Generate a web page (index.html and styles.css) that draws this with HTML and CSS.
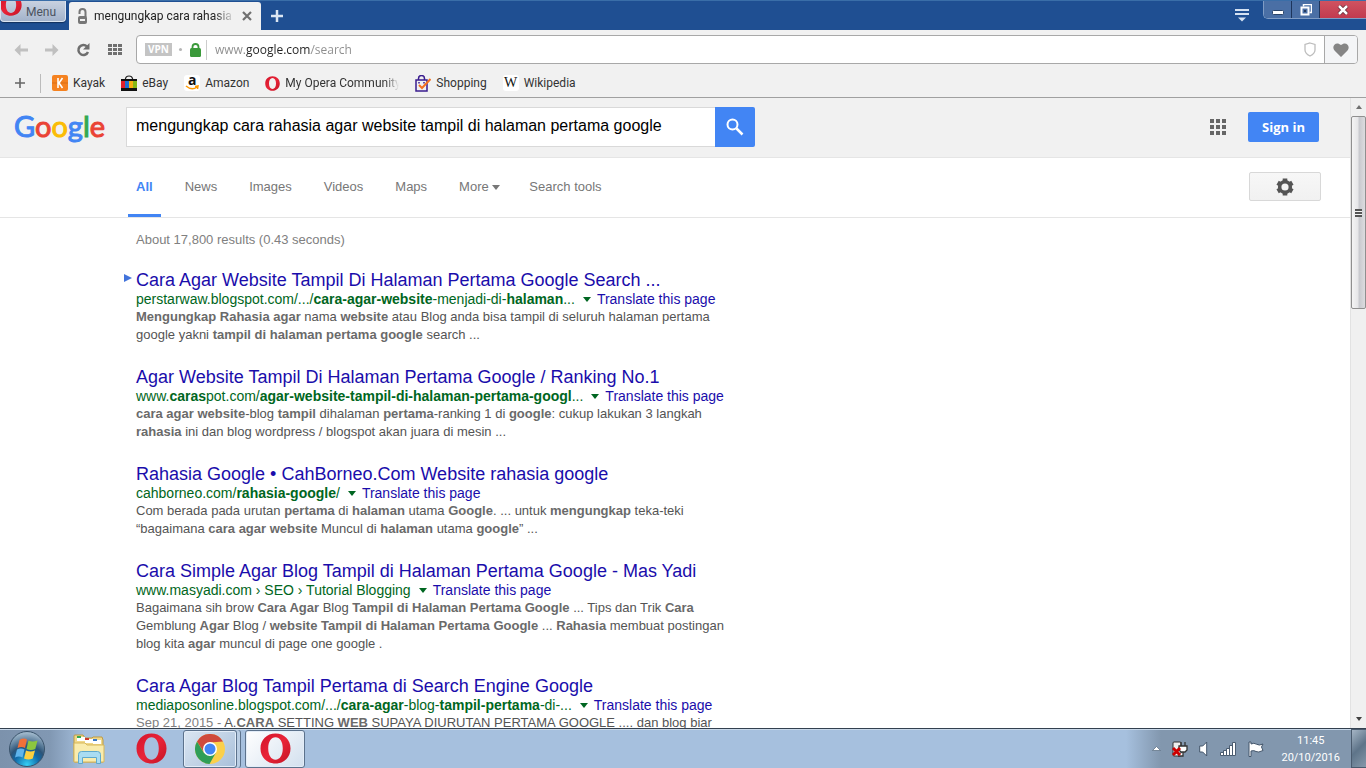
FILE: index.html
```html
<!DOCTYPE html>
<html lang="en">
<head>
    <meta charset="UTF-8">
    <title>mengungkap cara rahasia agar website tampil di halaman pertama google</title>
    <meta name="viewport" content="width=device-width, initial-scale=1.0" />
    <link rel="stylesheet" href="styles.css">
</head>

<body>
    <!-- shared drawings -->
    <svg class="defs" width="0" height="0">
        <defs>
            <linearGradient id="red" x1="0" y1="0" x2="1" y2="1">
                <stop offset="0" stop-color="#d3152a" />
                <stop offset=".5" stop-color="#e92438" />
                <stop offset="1" stop-color="#c41425" />
            </linearGradient>
            <symbol id="opera" viewBox="0 0 32 32">
                <path fill="url(#red)" fill-rule="evenodd" d="M16 .5C7 .5.500 7 .500 16S7 31.500 16 31.500 31.500 25 31.500 16 25 .5 16 .5zm0 4c4.500 0 7.500 4.500 7.500 11.500S20.500 27.500 16 27.500 8.500 23 8.500 16 11.500 4.500 16 4.500z" />
            </symbol>
        </defs>
    </svg>

    <header class="titlebar">
        <button class="menu-btn">
            <svg width="22" height="22"><use href="#opera" /></svg>
            Menu
        </button>
        <div class="tab">
            <svg width="9" height="16" viewBox="0 0 9 16">
                <path d="M1.500 6V4a3 3 0 0 1 6 0v5" fill="none" stroke="#777" stroke-width="2" />
                <rect x="0" y="8" width="9" height="8" rx="2" fill="#777" />
                <rect x="2" y="11" width="5" height="2" fill="#f1f1f1" />
            </svg>
            <span class="tab-title">mengungkap cara rahasia a</span>
            <button class="plain" aria-label="Close tab">
                <svg width="10" height="10" viewBox="0 0 10 10"><path d="M1 1l8 8M9 1L1 9" stroke="#707070" stroke-width="2.200" /></svg>
            </button>
        </div>
        <button class="plain new-tab" aria-label="New tab">
            <svg width="12" height="12" viewBox="0 0 12 12"><path d="M6 0v12M0 6h12" stroke="#dbe6f3" stroke-width="2.500" /></svg>
        </button>
        <button class="plain tab-list" aria-label="Tab menu">
            <svg width="14" height="13" viewBox="0 0 14 13"><path d="M0 1h14M0 5h14" stroke="#d5e2f2" stroke-width="2" /><path d="M3 8.500h8L7 12.500z" fill="#d5e2f2" /></svg>
        </button>
        <div class="win-btns">
            <button aria-label="Minimize">
                <svg width="12" height="12" viewBox="0 0 12 12"><rect x=".5" y="6.500" width="11" height="4" rx="1" fill="#fff" stroke="#2b4468" /></svg>
            </button>
            <button aria-label="Restore">
                <svg width="12" height="12" viewBox="0 0 12 12"><path d="M3.500 2.500v-2h8v8h-2" fill="none" stroke="#fff" stroke-width="1.500" /><rect x="1.500" y="3.500" width="7" height="7" fill="none" stroke="#fff" stroke-width="2" /><rect x="4" y="6" width="2" height="2" fill="#24395c" /></svg>
            </button>
            <button class="win-close" aria-label="Close">
                <svg width="12" height="10" viewBox="0 0 12 10"><path d="M2 1l8 8M10 1L2 9" stroke="#5b2330" stroke-width="4" /><path d="M2 1l8 8M10 1L2 9" stroke="#fff" stroke-width="2.500" /></svg>
            </button>
        </div>
    </header>

    <div class="toolbar">
        <div class="tools">
            <button class="plain" aria-label="Back">
                <svg width="14" height="12" viewBox="0 0 14 12"><path d="M6.500 0L.5 6l6 6V7.500H14v-3H6.500z" fill="#c0c0c0" /></svg>
            </button>
            <button class="plain" aria-label="Forward">
                <svg width="14" height="12" viewBox="0 0 14 12"><path d="M7.500 0l6 6-6 6V7.500H0v-3h7.500z" fill="#c0c0c0" /></svg>
            </button>
            <button class="plain" aria-label="Reload">
                <svg width="15" height="14" viewBox="0 0 15 14"><path d="M11 3.500A5 5 0 1 0 12 9" fill="none" stroke="#6e6e6e" stroke-width="2.500" /><path d="M13.500 0v6.500H7z" fill="#6e6e6e" /></svg>
            </button>
            <button class="plain" aria-label="Speed dial">
                <svg width="14" height="11" viewBox="0 0 14 11"><path d="M0 1.500h14M0 5.500h14M0 9.500h14" stroke="#707070" stroke-width="3" stroke-dasharray="4 1" /></svg>
            </button>
        </div>
        <div class="address">
            <span class="vpn">VPN</span>
            <span class="dot"></span>
            <svg width="11" height="14" viewBox="0 0 11 14"><path d="M2.500 7V4a3 3 0 0 1 6 0v3" fill="none" stroke="#3b9a3b" stroke-width="1.800" /><rect y="5" width="11" height="9" rx="1.500" fill="#3b9a3b" /></svg>
            <input class="url" type="text" aria-label="Address" value="www.google.com/search">
            <svg class="shield" width="12" height="15" viewBox="0 0 12 15"><path d="M6 1L11 2.500V8q0 3.500-5 6-5-2.500-5-6V2.500z" fill="none" stroke="#bdbdbd" stroke-width="1.300" /></svg>
            <button class="heart" aria-label="Add bookmark">
                <svg width="16" height="14" viewBox="0 0 16 14"><path d="M8 14L1.500 7.500C-2 3.500 3-2.500 8 2c5-4.500 10 1.500 6.500 5.500z" fill="#858585" /></svg>
            </button>
        </div>
    </div>

    <nav class="bookmarks">
        <button class="plain add" aria-label="Add to bookmarks bar">
            <svg width="10" height="10" viewBox="0 0 10 10"><path d="M5 0v10M0 5h10" stroke="#666" stroke-width="1.600" /></svg>
        </button>
        <a href="#">
            <svg width="16" height="16" viewBox="0 0 16 16"><rect width="16" height="16" rx="2" fill="#f58220" /><path d="M0 8h16" stroke="#d96f16" /><path d="M6 3v10M10.500 3L7 8l3.500 5" fill="none" stroke="#fff" stroke-width="1.600" /></svg>
            Kayak
        </a>
        <a href="#">
            <svg width="16" height="16" viewBox="0 0 16 16"><path d="M4.500 5V3.500Q5 1 8 1t3.500 2.500V5" fill="none" stroke="#222" stroke-width="1.200" /><path fill="#111" d="M0 4h16v12H0z" /><path fill="#e0202b" d="M0 6h4v7H0z" /><path fill="#1c6ed4" d="M4 6h4v7H4z" /><path fill="#f6ae12" d="M8 6h4v7H8z" /><path fill="#86b817" d="M12 6h4v7h-4z" /></svg>
            eBay
        </a>
        <a href="#">
            <span class="fav amazon">a<svg width="14" height="6" viewBox="0 0 14 6"><path d="M1 1q6 5 11 1M10 1.500l3-.5-.5 3" fill="none" stroke="#f90" stroke-width="1.500" /></svg></span>
            Amazon
        </a>
        <a href="#">
            <svg width="15" height="15"><use href="#opera" /></svg>
            <span class="fade">My Opera Community</span>
        </a>
        <a href="#">
            <svg width="16" height="17" viewBox="0 0 16 17"><path d="M1 5h11v11H1zM3.500 5V3.500a3 3 0 0 1 6 0V5M4 7v1.500M9 7v1.500" fill="none" stroke="#3a1d8f" stroke-width="1.500" /><path d="M4 10l3 3L15.500 4" fill="none" stroke="#f4701f" stroke-width="2" /></svg>
            Shopping
        </a>
        <a href="#"><span class="fav wiki">W</span>Wikipedia</a>
    </nav>

    <div class="viewport">
        <main class="page">
            <form class="search-header" onsubmit="return false">
                <a class="logo" href="#" aria-label="Google"><span class="b">G</span><span class="r">o</span><span class="y">o</span><span class="b">g</span><span class="g">l</span><span class="r">e</span></a>
                <input class="query" type="text" aria-label="Search" value="mengungkap cara rahasia agar website tampil di halaman pertama google">
                <button class="search-btn" aria-label="Google Search">
                    <svg width="18" height="18" viewBox="0 0 18 18"><circle cx="6.500" cy="6.500" r="5" fill="none" stroke="#fff" stroke-width="2" /><path d="M10.500 10.500l6 6" stroke="#fff" stroke-width="2.500" /></svg>
                </button>
                <div class="account">
                    <button class="plain" aria-label="Google apps">
                        <svg width="16" height="16" viewBox="0 0 16 16"><path d="M0 2h16M0 8h16M0 14h16" stroke="#666" stroke-width="4" stroke-dasharray="4 2" /></svg>
                    </button>
                    <a class="sign-in" href="#">Sign in</a>
                </div>
            </form>

            <nav class="filters">
                <a class="active" href="#">All</a>
                <a href="#">News</a>
                <a href="#">Images</a>
                <a href="#">Videos</a>
                <a href="#">Maps</a>
                <a class="more" href="#">More <i class="caret"></i></a>
                <a href="#">Search tools</a>
                <button class="options" aria-label="Options">
                    <svg width="18" height="18" viewBox="0 0 18 18"><path d="M9 .5v17M1.600 4.800l14.800 8.400M1.600 13.200l14.800-8.400" stroke="#555" stroke-width="4.600" /><circle cx="9" cy="9" r="5.300" fill="none" stroke="#555" stroke-width="3.600" /><circle cx="9" cy="9" r="3.600" fill="#f4f4f4" /></svg>
                </button>
            </nav>

            <div class="results">
                <p class="stats">About 17,800 results (0.43 seconds)</p>

                <article class="result first">
                    <h3><a href="#">Cara Agar Website Tampil Di Halaman Pertama Google Search ...</a></h3>
                    <div class="source"><cite>perstarwaw.blogspot.com/.../<b>cara-agar-website</b>-menjadi-di-<b>halaman</b>...</cite><button class="plain drop" aria-label="More"></button><a href="#">Translate this page</a></div>
                    <p><b>Mengungkap Rahasia agar</b> nama <b>website</b> atau Blog anda bisa tampil di seluruh halaman pertama<br>google yakni <b>tampil di halaman pertama google</b> search ...</p>
                </article>

                <article class="result">
                    <h3><a href="#">Agar Website Tampil Di Halaman Pertama Google / Ranking No.1</a></h3>
                    <div class="source"><cite>www.<b>caras</b>pot.com/<b>agar-website-tampil-di-halaman-pertama-googl</b>...</cite><button class="plain drop" aria-label="More"></button><a href="#">Translate this page</a></div>
                    <p><b>cara agar website</b>-blog <b>tampil</b> dihalaman <b>pertama</b>-ranking 1 di <b>google</b>: cukup lakukan 3 langkah<br><b>rahasia</b> ini dan blog wordpress / blogspot akan juara di mesin ...</p>
                </article>

                <article class="result">
                    <h3><a href="#">Rahasia Google • CahBorneo.Com Website rahasia google</a></h3>
                    <div class="source"><cite>cahborneo.com/<b>rahasia-google</b>/</cite><button class="plain drop" aria-label="More"></button><a href="#">Translate this page</a></div>
                    <p>Com berada pada urutan <b>pertama</b> di <b>halaman</b> utama <b>Google</b>. ... untuk <b>mengungkap</b> teka-teki<br>“bagaimana <b>cara agar website</b> Muncul di <b>halaman</b> utama <b>google</b>” ...</p>
                </article>

                <article class="result">
                    <h3><a href="#">Cara Simple Agar Blog Tampil di Halaman Pertama Google - Mas Yadi</a></h3>
                    <div class="source"><cite>www.masyadi.com › SEO › Tutorial Blogging</cite><button class="plain drop" aria-label="More"></button><a href="#">Translate this page</a></div>
                    <p>Bagaimana sih brow <b>Cara Agar</b> Blog <b>Tampil di Halaman Pertama Google</b> ... Tips dan Trik <b>Cara</b><br>Gemblung <b>Agar</b> Blog / <b>website Tampil di Halaman Pertama Google</b> ... <b>Rahasia</b> membuat postingan<br>blog kita <b>agar</b> muncul di page one google .</p>
                </article>

                <article class="result">
                    <h3><a href="#">Cara Agar Blog Tampil Pertama di Search Engine Google</a></h3>
                    <div class="source"><cite>mediaposonline.blogspot.com/.../<b>cara-agar</b>-blog-<b>tampil-pertama</b>-di-...</cite><button class="plain drop" aria-label="More"></button><a href="#">Translate this page</a></div>
                    <p><span class="date">Sep 21, 2015 - </span>A.<b>CARA</b> SETTING <b>WEB</b> SUPAYA DIURUTAN PERTAMA GOOGLE .... dan blog biar</p>
                </article>
            </div>
        </main>

        <div class="scrollbar">
            <i class="arrow up"></i>
            <div class="thumb"></div>
            <i class="arrow down"></i>
        </div>
    </div>

    <footer class="taskbar">
        <button class="plain start" aria-label="Start">
            <svg width="38" height="38" viewBox="0 0 38 38">
                <defs>
                    <radialGradient id="orb" cx=".5" cy=".95" r=".9">
                        <stop offset="0" stop-color="#35d0f5" />
                        <stop offset=".4" stop-color="#1169a8" />
                        <stop offset=".6" stop-color="#2c5478" />
                        <stop offset="1" stop-color="#9db6ca" />
                    </radialGradient>
                </defs>
                <circle cx="19" cy="19" r="17.500" fill="url(#orb)" stroke="#3a536b" />
                <path fill="#f0703a" d="M11.500 10q4-2.500 7.500-.5l-2 8.500q-3.500-2-7.500 0z" />
                <path fill="#8cc63f" d="M20.500 10.500q4 2 9 0l-2.200 8.500q-4.500 2-8.800 0z" />
                <path fill="#5fb4ec" d="M9 19.500q4-2 7.500 0l-2 8q-3.500-2-7.500 0z" />
                <path fill="#fdcf3f" d="M18 20.500q4.500 2 9 0l-2.200 8q-4.300 2-8.800 0z" />
            </svg>
        </button>
        <button class="plain task" aria-label="Windows Explorer">
            <svg width="32" height="30" viewBox="0 0 32 30">
                <path fill="#f0d88a" stroke="#bd9a43" d="M1 4V2q0-1 1-1h8l2 3h7l1-1h9l1 3v22H2q-1 0-1-1z" />
                <path fill="#fff" d="M4 3h8v4H4zM12 5h8v4h-8zM20 6h8v4h-8z" />
                <path fill="#35a852" d="M4 2h4v2H4z" /><path fill="#cf3a2c" d="M12 4h4v2h-4z" /><path fill="#3a79c9" d="M20 5h4v2h-4z" />
                <path fill="#f9ecae" stroke="#d7b75b" d="M1 9h11l2 2h17v17H1z" />
                <path fill="#a9dcf2" stroke="#5fa9cc" d="M5.500 29.500v-9q0-3 3-3h16q3 0 3 3v9h-4v-6h-14v6z" />
            </svg>
        </button>
        <button class="plain task" aria-label="Opera">
            <svg width="31" height="31"><use href="#opera" /></svg>
        </button>
        <button class="window-task stacked" aria-label="Google Chrome">
            <svg width="30" height="30" viewBox="0 0 30 30">
                <circle cx="15" cy="15" r="15" fill="#fbd04b" />
                <path fill="#cf4a3c" d="M2 7.500A15 15 0 0 1 28 7.500L15 8.500 9 18.500z" />
                <path fill="#2f9e58" d="M2 7.500L8.700 18.500 15 21.700 21 18.500 14.500 30A15 15 0 0 1 2 7.500z" />
                <circle cx="15" cy="15" r="7" fill="#fff" /><circle cx="15" cy="15" r="5.500" fill="#4285f4" />
            </svg>
        </button>
        <button class="window-task current" aria-label="Opera window">
            <svg width="31" height="31"><use href="#opera" /></svg>
        </button>

        <div class="tray">
            <svg width="9" height="5" viewBox="0 0 9 5"><path d="M.5 4.500L4.500.5l4 4z" fill="#fff" stroke="#55687d" stroke-width=".7" /></svg>
            <svg width="16" height="18" viewBox="0 0 16 18"><rect x="1" y="2" width="8" height="14" rx="1" fill="#eee" stroke="#333" /><path d="M9 2v4M13 2v4M7 6h8v4l-2 2H9L7 10zM11 12v4H6" fill="#fff" stroke="#333" stroke-width="1.300" /><path d="M1 8l7 7M8 8l-7 7" stroke="#c00" stroke-width="3" /></svg>
            <svg width="10" height="16" viewBox="0 0 10 16"><path d="M.7 5h3l4-4v14l-4-4h-3z" fill="#fff" stroke="#43556a" /></svg>
            <svg width="17" height="14" viewBox="0 0 17 14"><path d="M.5 10.500h3v3h-3zM3.500 8.500h3v5h-3zM6.500 6.500h3v7h-3zM9.500 3.500h3v10h-3zM12.500.5h3v13h-3z" fill="#fff" stroke="#4b5c70" /></svg>
            <svg width="16" height="16" viewBox="0 0 16 16"><path d="M1 1v14.500h2V10q3-1 5 .5t7-1L13.500 6 15 3Q11 5 8.500 3.200T3 3V1z" fill="#fff" stroke="#43556a" /></svg>
        </div>
        <div class="clock">
            <time>11:45</time>
            <time>20/10/2016</time>
        </div>
        <button class="show-desktop" aria-label="Show desktop"></button>
    </footer>
</body>

</html>
```
FILE: styles.css
```css
* {
    box-sizing: border-box;
}

body {
    display: flex;
    flex-direction: column;
    height: 100vh;
    margin: 0;
    overflow: hidden;

    background: white;
    font-family: "Liberation Sans", Arial, sans-serif;
    font-size: 13px;
}

a {
    text-decoration: none;
}

button {
    display: flex;
    align-items: center;
    justify-content: center;
    padding: 0;
    font-family: inherit;
}

svg {
    display: block;
    flex: none;
}

.defs {
    position: absolute;
}

.plain {
    border: none;
    background: none;
}

/* title bar */
.titlebar {
    display: flex;
    height: 30px;
    flex: none;

    background: #1f4f92;
    border-top: 1px solid #3a6ea8;
    font-family: Roboto, "Noto Sans", sans-serif;
    font-size: 12px;
}

.menu-btn {
    width: 66px;
    height: 21px;
    gap: 4px;
    align-items: flex-end;
    justify-content: flex-start;
    overflow: hidden;
    padding-bottom: 2px;

    background: linear-gradient(#c9d2e0, #a3b3cb);
    border: 1px solid #dbe4f0;
    border-top: none;
    border-radius: 0 0 4px 4px;
    box-shadow: 0 1px 1px #12305c;
    color: #4a5260;
    font-size: 12px;
}

.menu-btn svg {
    margin: 0 0 3px -1px;
}

.tab {
    display: flex;
    align-items: center;
    gap: 7px;
    width: 192px;
    margin: 1px 0 0 3px;
    padding: 0 9px;

    background: #f1f1f1;
    border-radius: 3px 3px 0 0;
}

.tab-title {
    flex: 1;
    overflow: hidden;
    white-space: nowrap;
    color: #222;
    -webkit-mask-image: linear-gradient(to right, black 85%, transparent);
    mask-image: linear-gradient(to right, black 85%, transparent);
}

.new-tab {
    margin-left: 10px;
}

.tab-list {
    margin-left: auto;
    margin-right: 14px;
}

.win-btns {
    display: flex;
    height: 18px;
    border: 1px solid #7f9cc4;
    border-top: none;
    border-right: none;
    border-radius: 0 0 0 5px;
    overflow: hidden;
}

.win-btns button {
    width: 28px;
    border: none;
    border-right: 1px solid #1d355c;
    background: #4a6fa5;
}

.win-btns .win-close {
    width: 46px;
    border: none;
    background: linear-gradient(#cf5360, #c23a4f);
}

/* toolbar */
.toolbar {
    display: flex;
    flex: none;
    padding: 5px 8px 5px 14px;
    background: #f1f1f1;
}

.tools {
    display: flex;
    gap: 17px;
    width: 122px;
}

.address {
    display: flex;
    align-items: center;
    flex: 1;
    height: 29px;

    background: white;
    border: 1px solid #a8a8a8;
    border-radius: 4px;
    overflow: hidden;
}

.vpn {
    margin-left: 8px;
    padding: 0 3px;
    background: #c4c4c4;
    color: white;
    font: bold 10px/13px "Open Sans", sans-serif;
}

.dot {
    width: 3px;
    height: 3px;
    margin: 0 8px 0 7px;
    border-radius: 50%;
    background: #b5b5b5;
}

.url {
    flex: 1;
    min-width: 0;
    height: 20px;
    margin-left: 5px;
    padding: 0 8px;

    border: none;
    border-left: 1px solid #ccc;
    outline: none;
    font-family: "Open Sans", "Noto Sans", sans-serif;
    font-size: 12px;
    /* the domain is darker than the rest of the address */
    background: linear-gradient(to right, #8c8c8c 39px, #222 39px, #222 104px, #8c8c8c 104px);
    -webkit-background-clip: text;
    background-clip: text;
    -webkit-text-fill-color: transparent;
}

.shield {
    margin-right: 8px;
}

.heart {
    width: 33px;
    height: 100%;
    border: none;
    border-left: 1px solid #a8a8a8;
    background: #f4f5f7;
}

/* bookmarks bar */
.bookmarks {
    display: flex;
    align-items: center;
    gap: 16px;
    height: 29px;
    flex: none;
    padding-left: 15px;

    background: #f1f1f1;
    border-bottom: 1px solid #a0a0a0;
    font-family: Roboto, "Noto Sans", sans-serif;
    font-size: 12px;
}

.bookmarks .add {
    height: 19px;
    padding-right: 15px;
    margin-right: -5px;
    border-right: 1px solid #bbb;
}

.bookmarks a {
    display: flex;
    align-items: center;
    gap: 5px;
    color: #333;
}

.fav {
    width: 16px;
    height: 16px;
    border-radius: 3px;
    background: white;
    text-align: center;
    color: #111;
}

.amazon {
    font: bold 14px/9px "Open Sans", sans-serif;
}

.amazon svg {
    margin: 1px;
}

.wiki {
    font: 14px/16px "Liberation Serif", serif;
}

.fade {
    width: 114px;
    overflow: hidden;
    white-space: nowrap;
    -webkit-mask-image: linear-gradient(to right, black 88%, transparent);
    mask-image: linear-gradient(to right, black 88%, transparent);
}

/* web page */
.viewport {
    display: flex;
    flex: 1;
    min-height: 0;
}

.page {
    flex: 1;
    min-width: 0;
    overflow: hidden;
}

.search-header {
    display: flex;
    align-items: center;
    height: 60px;
    padding: 0 0 1px 14px;
    background: #f1f1f1;
    border-bottom: 1px solid #e5e5e5;
}

.logo {
    width: 112px;
    padding-bottom: 2px;
    font: 29px/36px Lato, sans-serif;
    -webkit-text-stroke: 1px;
}

.b { color: #4285f4; }
.r { color: #ea4335; }
.y { color: #fbbc05; }
.g { color: #34a853; }

.query {
    flex: 0 1 589px;
    min-width: 0;
    height: 40px;
    padding: 0 9px 2px;
    border: 1px solid #d9d9d9;
    border-right: none;
    outline: none;
    background: white;
    color: #000;
    font: 16px "Liberation Sans", Arial, sans-serif;
}

.search-btn {
    width: 40px;
    height: 40px;
    border: none;
    border-radius: 0 2px 2px 0;
    background: #4285f4;
}

.account {
    display: flex;
    gap: 22px;
    margin: 0 31px 0 auto;
}

.sign-in {
    padding: 0 14px;
    border-radius: 2px;
    background: #4285f4;
    color: white;
    font: bold 13px/30px "Open Sans", sans-serif;
}

.filters {
    display: flex;
    gap: 16px;
    height: 60px;
    padding-left: 128px;
    border-bottom: 1px solid #e5e5e5;
}

.filters a {
    padding: 0 8px;
    color: #777;
    line-height: 57px;
}

.filters .active {
    border-bottom: 3px solid #4285f4;
    color: #4285f4;
    font-weight: bold;
}

.filters .more {
    margin-right: -3px;
}

.caret {
    display: inline-block;
    border: 4px solid transparent;
    border-top: 5px solid #777;
    border-bottom: none;
    vertical-align: 1px;
}

.options {
    width: 72px;
    height: 29px;
    margin: 14px 29px 0 auto;
    border: 1px solid #d8d8d8;
    border-radius: 2px;
    background: linear-gradient(#f7f7f7, #f1f1f1);
}

.results {
    padding-left: 136px;
    white-space: nowrap;
}

.stats {
    margin: 0;
    padding: 13px 0 20px;
    color: #808080;
    line-height: 18px;
}

.result {
    position: relative;
    margin-bottom: 22px;
}

.first::before {
    content: "";
    position: absolute;
    top: 5px;
    left: -12px;
    border: 4px solid transparent;
    border-left: 8px solid #4273db;
    border-right: none;
}

.result h3 {
    margin: 0;
    font-size: 18px;
    font-weight: normal;
    line-height: 22px;
}

.result a {
    color: #1a0dab;
}

.source {
    display: flex;
    align-items: center;
    font-size: 14px;
    line-height: 17px;
}

.source cite {
    color: #006621;
    font-style: normal;
}

.drop {
    margin: 0 6px 0 8px;
    border: 4px solid transparent;
    border-top: 5px solid #006621;
    border-bottom: none;
}

.result p {
    margin: 0;
    color: #545454;
    line-height: 18px;
}

.result p b {
    color: #6a6a6a;
}

.result .date {
    color: #808080;
}

/* scrollbar */
.scrollbar {
    display: flex;
    flex-direction: column;
    align-items: center;
    width: 16px;
    padding: 7px 0;
    background: #f0f0f0;
    border-left: 1px solid #e2e2e2;
}

.arrow {
    border: 3px solid transparent;
}

.up {
    border-top: none;
    border-bottom: 4px solid #707070;
}

.down {
    margin-top: auto;
    border-bottom: none;
    border-top: 4px solid #404040;
}

.thumb {
    display: flex;
    align-items: center;
    justify-content: center;
    width: 15px;
    height: 193px;
    margin-top: 7px;
    border: 1px solid #8f8f8f;
    border-radius: 2px;
    background: linear-gradient(to right, #f4f4f4, #e6e6e8 45%, #c8c9ce 55%, #dcdcdf);
}

.thumb::before {
    content: "";
    width: 7px;
    height: 8px;
    background: repeating-linear-gradient(#555 0 2px, #f5f5f5 2px 3px);
}

/* taskbar */
.taskbar {
    display: flex;
    align-items: center;
    height: 40px;
    flex: none;

    background: linear-gradient(to right, #7c92ac, #8198b3 50px, #a6c0de 85px, #a6c0de calc(100% - 240px), #8297ae calc(100% - 205px), #8297ae);
    border-top: 1px solid #33404f;
    box-shadow: inset 0 1px #c8d8e9;
}

.start {
    margin: 0 20px 0 8px;
}

.task {
    width: 62px;
}

.start + .task {
    margin-left: -8px;
}

.window-task {
    width: 60px;
    height: 38px;
    border: 1px solid #5c728c;
    border-radius: 3px;
    background: linear-gradient(135deg, #dbe6f2, #a9c0da);
    box-shadow: inset 0 0 0 1px #e3edf8;
}

.stacked {
    width: 54px;
    margin: 0 8px 0 1px;
    box-shadow: inset 0 0 0 1px #e3edf8, 3px 0 #b9cde3, 4px 0 #5c728c;
}

.current {
    background: linear-gradient(135deg, #fff, #d3e0ee);
}

.tray {
    display: flex;
    align-items: center;
    gap: 11px;
    margin-left: auto;
}

.clock {
    display: flex;
    flex-direction: column;
    margin: 0 11px 0 17px;
    color: white;
    font: 11px/17px Roboto, "Noto Sans", sans-serif;
    text-align: center;
}

.show-desktop {
    width: 15px;
    height: 100%;
    border: 1px solid #4a5b6e;
    border-right: none;
    background: linear-gradient(135deg, #a5b5c5, #5e7489 50%, #8598aa);
}
```
